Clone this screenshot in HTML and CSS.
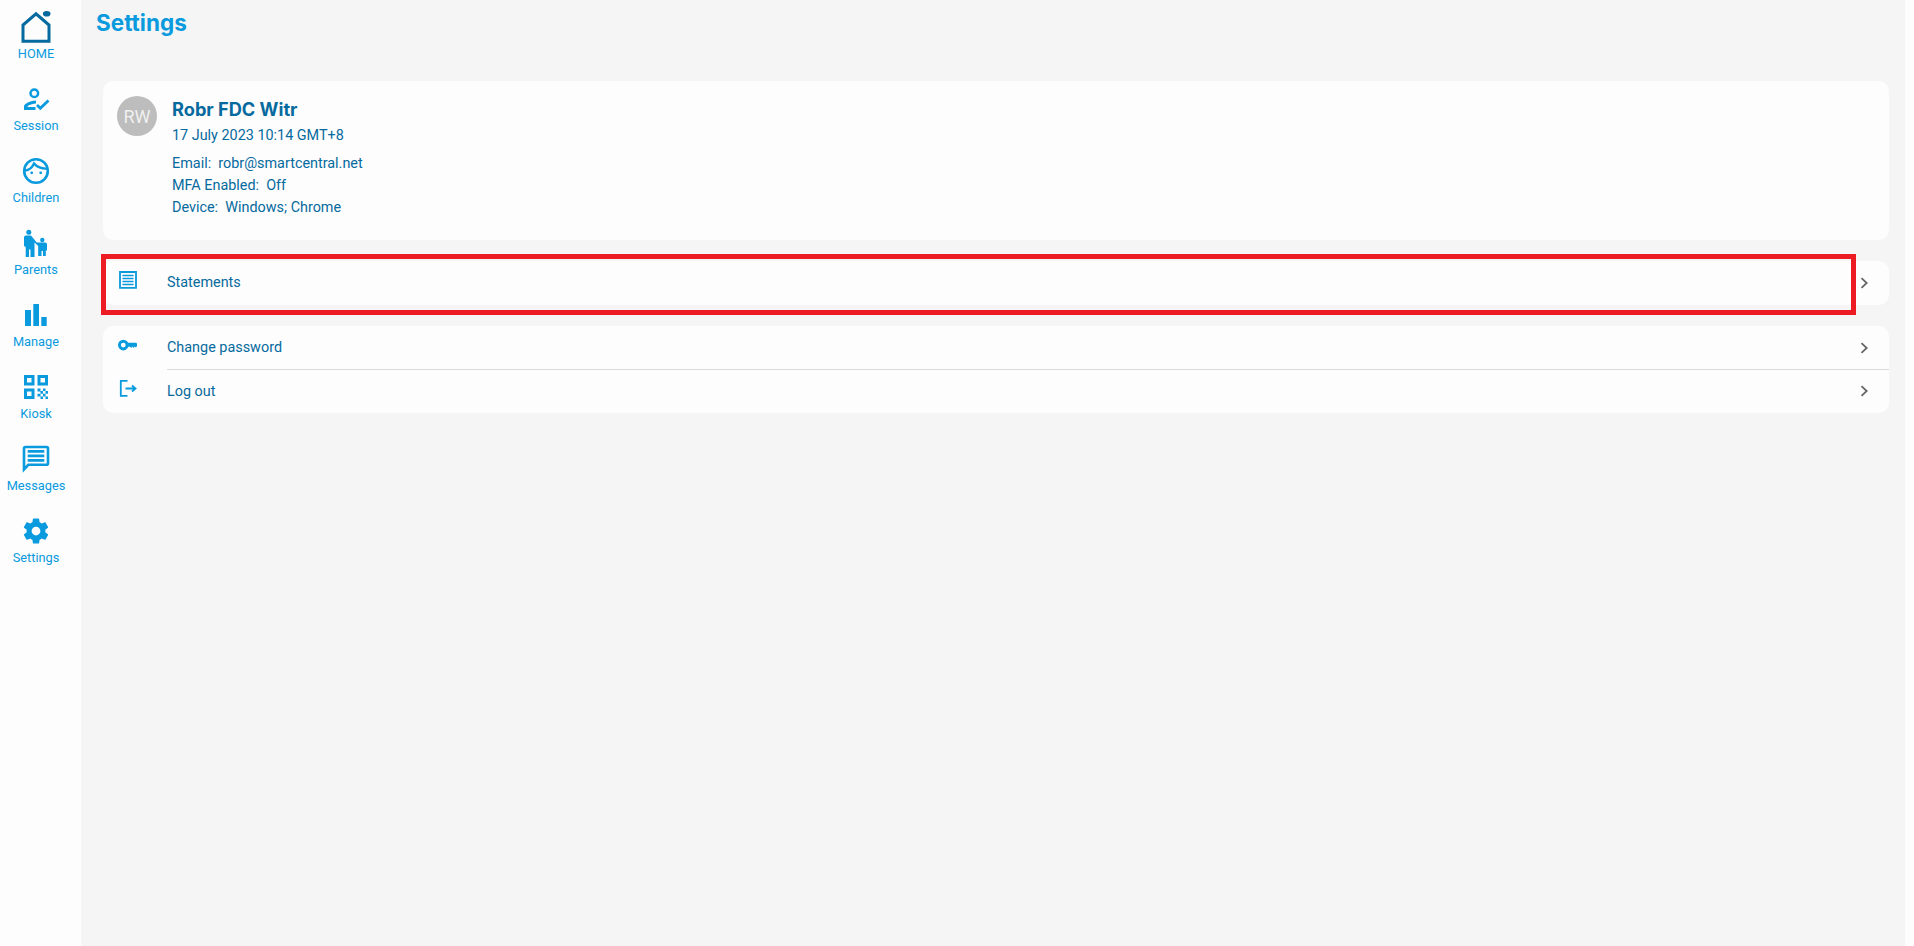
FILE: index.html
```html
<!DOCTYPE html>
<html lang="en">
<head>
    <meta charset="UTF-8">
    <title>Settings</title>
    <link rel="stylesheet" href="styles.css">
</head>
<body>
    <nav class="sidebar">
        <a class="nav-item nav-home">
            <svg class="nav-icon" viewBox="0 0 36 36" width="36" height="36">
                <path d="M5 32.200V16L18 4.800L31 16V32.200Z" fill="none" stroke="#066a9e" stroke-width="3"/>
                <ellipse cx="28.700" cy="4.700" rx="3.800" ry="2.800" fill="#066a9e"/>
            </svg>
            <span>HOME</span>
        </a>
        <a class="nav-item">
            <svg class="nav-icon" viewBox="0 0 30 30" width="30" height="30">
                <circle cx="13.300" cy="9.300" r="3.800" fill="none" stroke="#0a9ade" stroke-width="2.500"/>
                <path d="M3 26V22.500C3 20 8 17 15 16.500V19.500C10 20 6.500 21.500 6.500 23H14.500V26Z" fill="#0a9ade"/>
                <path d="M16 21L19.300 24.300L27.500 16.500" fill="none" stroke="#0a9ade" stroke-width="2.800"/>
            </svg>
            <span>Session</span>
        </a>
        <a class="nav-item">
            <svg class="nav-icon" viewBox="0 0 30 30" width="30" height="30">
                <circle cx="15" cy="15" r="11.800" fill="none" stroke="#0a9ade" stroke-width="2.600"/>
                <path d="M4 14.500C8.500 14 11.500 11 13 7.500C15.500 10.800 21 13 26 12.500" fill="none" stroke="#0a9ade" stroke-width="2.400"/>
                <circle cx="10.700" cy="16.800" r="1.400" fill="#0a9ade"/>
                <circle cx="19.700" cy="16.800" r="1.400" fill="#0a9ade"/>
            </svg>
            <span>Children</span>
        </a>
        <a class="nav-item">
            <svg class="nav-icon" viewBox="0 0 30 30" width="30" height="30">
                <circle cx="7.800" cy="4.200" r="2.500" fill="#0a9ade"/>
                <circle cx="21.300" cy="12" r="2.200" fill="#0a9ade"/>
                <path d="M5 7.500H10L15.800 14.500H24C25.300 14.500 26 15.300 26 16.500V22.500H24.800V28H22V23H20.500V28H17.200V18L13.500 14.500V29H9.500V21.500H8V29H4.700V19L3 18V9.500C3 8.300 3.800 7.500 5 7.500Z" fill="#0a9ade"/>
            </svg>
            <span>Parents</span>
        </a>
        <a class="nav-item">
            <svg class="nav-icon" viewBox="0 0 30 30" width="30" height="30">
                <rect x="4" y="10" width="6" height="16" fill="#0a9ade"/>
                <rect x="12.300" y="4" width="5.700" height="22" fill="#0a9ade"/>
                <rect x="20.300" y="17" width="5.400" height="9" fill="#0a9ade"/>
            </svg>
            <span>Manage</span>
        </a>
        <a class="nav-item">
            <svg class="nav-icon" viewBox="0 0 30 30" width="30" height="30">
                <path d="M3 3H13.500V13.500H3ZM6 6V10.500H10.500V6ZM16.500 3H27V13.500H16.500ZM19.500 6V10.500H24V6ZM3 16.500H13.500V27H3ZM6 19.500V24H10.500V19.500Z" fill="#0a9ade" fill-rule="evenodd"/>
                <path d="M16.500 16.500H19.500V19.500H16.500ZM22 16.500H24.500V19H22ZM24.500 19H27V21.700H24.500ZM19.500 19H22V21.700H19.500ZM16.500 21.700H19.500V24.500H16.500ZM22 21.700H24.500V24.500H22ZM19.500 24.500H22V27H19.500ZM24.500 24.500H27V27H24.500Z" fill="#0a9ade"/>
            </svg>
            <span>Kiosk</span>
        </a>
        <a class="nav-item">
            <svg class="nav-icon" viewBox="0 0 30 30" width="30" height="30">
                <path d="M3 25.500V4.500C3 3.500 3.500 3 4.500 3H25.500C26.500 3 27 3.500 27 4.500V19.300C27 20.300 26.500 20.800 25.500 20.800H7.300Z" fill="none" stroke="#0a9ade" stroke-width="2.600"/>
                <path d="M6.700 6H23.300V8.800H6.700ZM6.700 10.500H23.300V13.300H6.700ZM6.700 15H23.300V17.800H6.700Z" fill="#0a9ade"/>
            </svg>
            <span>Messages</span>
        </a>
        <a class="nav-item">
            <svg class="nav-icon" viewBox="0 0 24 24" width="30" height="30">
                <path d="M19.430 12.980c.04-.32.07-.64.07-.98s-.03-.66-.07-.98l2.110-1.650c.19-.15.24-.42.120-.64l-2-3.460c-.12-.22-.39-.3-.61-.22l-2.490 1c-.52-.4-1.080-.73-1.690-.98l-.38-2.650C14.460 2.180 14.250 2 14 2h-4c-.25 0-.46.18-.49.42l-.38 2.650c-.61.25-1.170.59-1.690.98l-2.490-1c-.23-.09-.49 0-.61.22l-2 3.460c-.13.22-.07.49.12.64l2.110 1.650c-.04.32-.07.65-.07.98s.03.66.07.98l-2.110 1.650c-.19.15-.24.42-.12.64l2 3.460c.12.22.39.3.61.22l2.490-1c.52.4 1.080.73 1.690.98l.38 2.650c.03.24.24.42.49.42h4c.25 0 .46-.18.49-.42l.38-2.650c.61-.25 1.170-.59 1.690-.98l2.490 1c.23.09.49 0 .61-.22l2-3.460c.12-.22.07-.49-.12-.64l-2.110-1.650zM12 15.500c-1.930 0-3.500-1.570-3.500-3.500s1.570-3.500 3.500-3.500 3.500 1.570 3.500 3.500-1.570 3.500-3.500 3.500z" fill="#0a9ade"/>
            </svg>
            <span>Settings</span>
        </a>
    </nav>

    <main class="content">
        <h1 class="page-title">Settings</h1>

        <section class="card profile">
            <div class="avatar">RW</div>
            <div class="profile-info">
                <h2 class="profile-name">Robr FDC Witr</h2>
                <p class="profile-date">17 July 2023 10:14 GMT+8</p>
                <p>Email:&nbsp; robr@smartcentral.net</p>
                <p>MFA Enabled:&nbsp; Off</p>
                <p>Device:&nbsp; Windows; Chrome</p>
            </div>
        </section>

        <section class="card menu menu-statements">
            <a class="menu-row">
                <svg class="menu-icon" viewBox="0 0 20 20" width="20" height="20">
                    <path d="M3 1H19V16.800H3Z" fill="none" stroke="#0a9ade" stroke-width="1.800"/>
                    <path d="M5.500 4.400H16.500M5.500 7.400H16.500M5.500 10.400H16.500M5.500 13.400H16.500" stroke="#0a9ade" stroke-width="1.500"/>
                </svg>
                <span class="menu-label">Statements</span>
                <svg class="chevron" viewBox="0 0 10 12" width="10" height="12"><path d="M1.500 1.200L6.700 6L1.500 10.800" fill="none" stroke="#666" stroke-width="1.800"/></svg>
            </a>
            <div class="highlight"></div>
        </section>

        <section class="card menu">
            <a class="menu-row menu-row-first">
                <svg class="menu-icon" viewBox="0 0 20 20" width="20" height="20">
                    <path d="M6.300 3.800A5.300 5.300 0 1 1 6.300 14.400A5.300 5.300 0 1 1 6.300 3.800ZM6.300 6.700A2.400 2.400 0 1 0 6.300 11.500A2.400 2.400 0 1 0 6.300 6.700Z" fill="#0a9ade" fill-rule="evenodd"/>
                    <path d="M10 6.700H19.300L20.800 9L19 11.500L17.800 10.500L16.600 11.900L15.400 10.500L14.200 11.900L13 10.800H10Z" fill="#0a9ade"/>
                </svg>
                <span class="menu-label">Change password</span>
                <svg class="chevron" viewBox="0 0 10 12" width="10" height="12"><path d="M1.500 1.200L6.700 6L1.500 10.800" fill="none" stroke="#666" stroke-width="1.800"/></svg>
            </a>
            <a class="menu-row menu-row-divided">
                <svg class="menu-icon" viewBox="0 0 20 20" width="20" height="20">
                    <path d="M10.500 1.800H3.800V16.800H10.500" fill="none" stroke="#0a9ade" stroke-width="1.800"/>
                    <path d="M8.500 9.500H18M15 6.500L18.500 9.500L15 12.500" fill="none" stroke="#0a9ade" stroke-width="1.800"/>
                </svg>
                <span class="menu-label">Log out</span>
                <svg class="chevron" viewBox="0 0 10 12" width="10" height="12"><path d="M1.500 1.200L6.700 6L1.500 10.800" fill="none" stroke="#666" stroke-width="1.800"/></svg>
            </a>
        </section>
    </main>
</body>
</html>
```

FILE: styles.css
```css
* {
    margin: 0;
    padding: 0;
    box-sizing: border-box;
}

body {
    font-family: Roboto, 'Liberation Sans', sans-serif;
    background: #fdfdfd;
    height: 946px;
    overflow: hidden;
    display: flex;
    color: #066a9e;
}

.sidebar {
    width: 81px;
    flex-shrink: 0;
    background: #fdfdfd;
    display: flex;
    flex-direction: column;
    padding: 9px 9px 0 0;
}

.nav-item {
    height: 72px;
    display: flex;
    flex-direction: column;
    align-items: center;
    color: #0a9ade;
    font-size: 12.8px;
    line-height: 16px;
}

.nav-icon {
    display: block;
    height: 36px;
    margin-bottom: 1px;
}

.content {
    width: 1824px;
    background: #f5f5f5;
    padding: 0 16px 0 22px;
    position: relative;
}

.page-title {
    font-family: Inter, 'Open Sans', sans-serif;
    font-size: 22.5px;
    font-weight: 700;
    line-height: 30px;
    color: #0a9ade;
    margin: 8px 0 0 -7px;
}

.card {
    background: #fdfdfd;
    border-radius: 10px;
}

.profile {
    margin-top: 43px;
    height: 159px;
    padding: 15px 14px;
    display: flex;
    gap: 15px;
}

.avatar {
    width: 40px;
    height: 40px;
    border-radius: 50%;
    background: #bdbdbd;
    color: #f0f0f0;
    font-size: 18px;
    display: flex;
    align-items: center;
    justify-content: center;
}

.profile-info {
    font-size: 14.4px;
    line-height: 22px;
}

.profile-name {
    font-family: Inter, 'Open Sans', sans-serif;
    font-size: 18.2px;
    font-weight: 700;
    line-height: 24px;
    margin: 1px 0 4px;
}

.profile-date {
    margin-bottom: 6px;
}

.menu-statements {
    margin-top: 21px;
    position: relative;
}

.menu {
    margin-bottom: 21px;
}

.menu-row {
    height: 44px;
    display: flex;
    align-items: center;
    padding: 0 19px 0 14px;
    font-size: 14.4px;
}

.menu-row-first {
    height: 43px;
}

.menu-row-divided {
    position: relative;
}

.menu-row-divided::before {
    content: '';
    position: absolute;
    top: 0;
    left: 64px;
    right: 0;
    border-top: 1px solid #dcdcdc;
}

.menu-icon {
    margin-top: -4px;
    flex-shrink: 0;
}

.menu-label {
    margin-left: 30px;
    flex: 1;
}

.menu-statements .menu-label {
    margin-top: -2px;
}

.highlight {
    position: absolute;
    left: -2px;
    top: -7px;
    width: 1755px;
    height: 61px;
    border: 5px solid #ed1c24;
}
```
